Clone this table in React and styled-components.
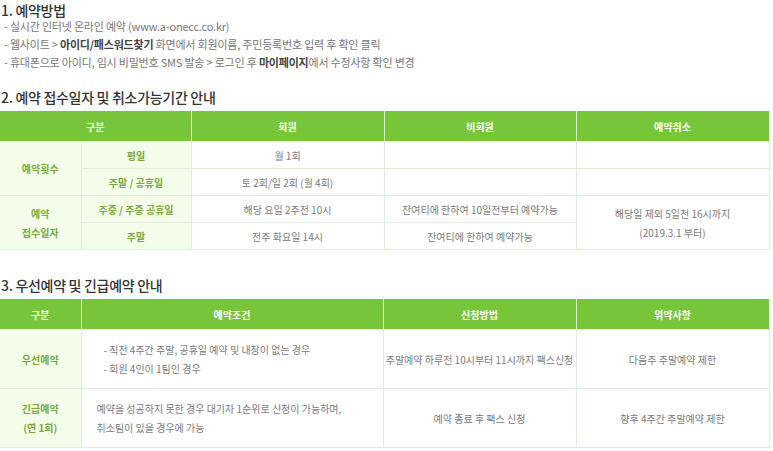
import styled, { createGlobalStyle } from 'styled-components'

const GlobalStyle = createGlobalStyle`
    body {
        margin: 0;
        background: #fff;
        font-family: "Noto Sans CJK KR", "Noto Sans", sans-serif;
    }
`

const green = '#77c639'
const line = '#dfeed5'

const Page = styled.div`
    width: 773px;
    padding-top: 3px;
`

const Title = styled.h3`
    margin: 0;
    padding-left: 1px;
    font-size: 14px;
    font-weight: 500;
    line-height: ${props => props.$lh || 20}px;
    color: #333;
    letter-spacing: -0.3px;
    margin-top: ${props => props.$top || 0}px;
    margin-bottom: ${props => props.$bottom || 0}px;
`

const List = styled.ul`
    list-style: none;
    margin: 0;
    padding: 0 0 0 4px;
`

const Item = styled.li`
    font-size: 11px;
    line-height: 18px;
    color: #777;
    letter-spacing: -0.2px;
    b {
        color: #444;
        font-weight: 700;
    }
`

const Table = styled.table`
    width: 769px;
    border-collapse: collapse;
    table-layout: fixed;
    font-size: 10px;
    color: #7a7a7a;
`

const Th = styled.th`
    background: ${green};
    color: #fff;
    font-weight: 700;
    font-size: 10px;
    height: ${props => props.$h || 30}px;
    padding: 0;
    border: 1px solid ${line};
    border-top: none;
    border-left: ${props => props.$first ? 'none' : `1px solid ${line}`};
`

const Td = styled.td`
    height: ${props => props.$h || 26}px;
    padding: 0 ${props => props.$left ? '22px' : '0'};
    text-align: ${props => props.$left ? 'left' : 'center'};
    border: 1px solid ${line};
    line-height: 19px;
    white-space: nowrap;
`

const Label = styled(Td)`
    background: #f4fdea;
    color: #7aa83a;
    font-weight: 700;
    border-left: ${props => props.$first ? 'none' : `1px solid ${line}`};
`

const Section1 = () => (
    <>
        <Title $lh={14}>1. 예약방법</Title>
        <List>
            <Item>- 실시간 인터넷 온라인 예약 (www.a-onecc.co.kr)</Item>
            <Item>- 웹사이트 &gt; <b>아이디/패스워드찾기</b> 화면에서 회원이름, 주민등록번호 입력 후 확인 클릭</Item>
            <Item>- 휴대폰으로 아이디, 임시 비밀번호 SMS 발송 &gt; 로그인 후 <b>마이페이지</b>에서 수정사항 확인 변경</Item>
        </List>
    </>
)

const Section2 = () => (
    <>
        <Title $top={16} $bottom={4}>2. 예약 접수일자 및 취소가능기간 안내</Title>
        <Table>
            <colgroup>
                <col style={{ width: 81 }} />
                <col style={{ width: 110 }} />
                <col style={{ width: 193 }} />
                <col style={{ width: 192 }} />
                <col style={{ width: 193 }} />
            </colgroup>
            <thead>
                <tr>
                    <Th colSpan={2} $first>구분</Th>
                    <Th>회원</Th>
                    <Th>비회원</Th>
                    <Th>예약취소</Th>
                </tr>
            </thead>
            <tbody>
                <tr>
                    <Label rowSpan={2} $first>예약횟수</Label>
                    <Label>평일</Label>
                    <Td>월 1회</Td>
                    <Td></Td>
                    <Td></Td>
                </tr>
                <tr>
                    <Label>주말 / 공휴일</Label>
                    <Td>토 2회/일 2회 (월 4회)</Td>
                    <Td></Td>
                    <Td></Td>
                </tr>
                <tr>
                    <Label rowSpan={2} $first>예약<br />접수일자</Label>
                    <Label>주중 / 주중 공휴일</Label>
                    <Td>해당 요일 2주전 10시</Td>
                    <Td>잔여티에 한하여 10일전부터 예약가능</Td>
                    <Td rowSpan={2}>해당일 제외 5일전 16시까지<br />(2019.3.1 부터)</Td>
                </tr>
                <tr>
                    <Label>주말</Label>
                    <Td>전주 화요일 14시</Td>
                    <Td>잔여티에 한하여 예약가능</Td>
                </tr>
            </tbody>
        </Table>
    </>
)

const Section3 = () => (
    <>
        <Title $top={25} $bottom={4}>3. 우선예약 및 긴급예약 안내</Title>
        <Table>
            <colgroup>
                <col style={{ width: 81 }} />
                <col style={{ width: 302 }} />
                <col style={{ width: 193 }} />
                <col style={{ width: 193 }} />
            </colgroup>
            <thead>
                <tr>
                    <Th $first>구분</Th>
                    <Th>예약조건</Th>
                    <Th>신청방법</Th>
                    <Th>위약사항</Th>
                </tr>
            </thead>
            <tbody>
                <tr>
                    <Label $first $h={58}>우선예약</Label>
                    <Td $left $h={58}>- 직전 4주간 주말, 공휴일 예약 및 내장이 없는 경우<br />- 회원 4인이 1팀인 경우</Td>
                    <Td $h={58}>주말예약 하루전 10시부터 11시까지 팩스신청</Td>
                    <Td $h={58}>다음주 주말예약 제한</Td>
                </tr>
                <tr>
                    <Label $first $h={58}>긴급예약<br />(연 1회)</Label>
                    <Td $left $h={58} style={{ paddingLeft: 15 }}>예약을 성공하지 못한 경우 대기자 1순위로 신청이 가능하며,<br />취소팀이 있을 경우에 가능</Td>
                    <Td $h={58}>예약 종료 후 팩스 신청</Td>
                    <Td $h={58}>향후 4주간 주말예약 제한</Td>
                </tr>
            </tbody>
        </Table>
    </>
)

export default function App() {
    return (
        <>
            <GlobalStyle />
            <Page>
                <Section1 />
                <Section2 />
                <Section3 />
            </Page>
        </>
    )
}
